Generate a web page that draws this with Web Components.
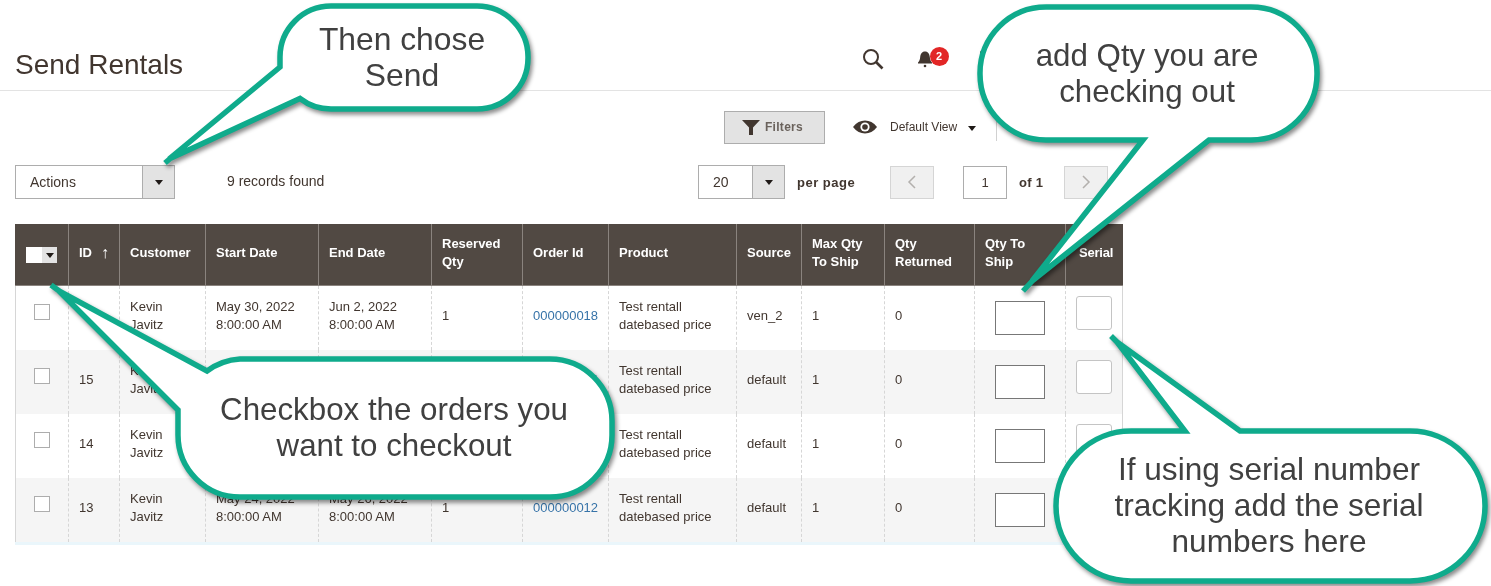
<!DOCTYPE html>
<html>
<head>
<meta charset="utf-8">
<title>Send Rentals</title>
<style>
    html, body { margin: 0; padding: 0; background: #fff; overflow: hidden; }
    body { width: 1491px; height: 586px; position: relative; font-family: "Liberation Sans", Arial, sans-serif; color: #41362f; }
</style>
</head>
<body>
<rental-header title="Send Rentals"></rental-header>
<grid-tools></grid-tools>
<rental-grid></rental-grid>

<speech-bubble cx="402" cy="57" width="220" size="31.8"
    path="M169 159 L280 67 V57 A51 51 0 0 1 331 6 H477 A51 51 0 0 1 528 57 V58 A51 51 0 0 1 477 109 H331 A51 51 0 0 1 300 98.5 Z M172 157 L165 163">Then chose Send</speech-bubble>
<speech-bubble cx="1147" cy="74" width="260" size="31.3"
    path="M1032 281 L1143 140 H1046 A66 66 0 0 1 980 74 V73 A66 66 0 0 1 1046 7 H1251 A66 66 0 0 1 1317 73 V74 A66 66 0 0 1 1251 140 H1209 Z M1036 277 L1023 291">add Qty you are checking out</speech-bubble>
<speech-bubble cx="394" cy="428" width="380" size="31.3"
    path="M59 291 L207 371 A62 62 0 0 1 240 359 H550 A62 62 0 0 1 612 421 V435 A62 62 0 0 1 550 497 H240 A62 62 0 0 1 178 435 V410 Z M62 293 L51 285">Checkbox the orders you want to checkout</speech-bubble>
<speech-bubble cx="1269" cy="505" width="330" size="31.6"
    path="M1117 342 L1240 431 H1410 A75 75 0 0 1 1485 506 A75 75 0 0 1 1410 581 H1131 A75 75 0 0 1 1056 506 A75 75 0 0 1 1131 431 H1185 Z M1120 345 L1111 336">If using serial number tracking add the serial numbers here</speech-bubble>

<script>
class RentalHeader extends HTMLElement {
    constructor() {
        super();
        this.attachShadow({ mode: 'open' });
        this.shadowRoot.innerHTML = `
            <style>
                :host {
                    display: flex;
                    align-items: flex-end;
                    justify-content: space-between;
                    height: 91px;
                    box-sizing: border-box;
                    padding: 0 0 10px 15px;
                    border-bottom: 1px solid #e3e3e3;
                    will-change: transform;
                }
                h1 {
                    margin: 0;
                    font: 400 28px/30px "Liberation Sans", Arial, sans-serif;
                    color: #41362f;
                }
                .actions {
                    display: flex;
                    align-items: center;
                    gap: 32px;
                    margin: 0 499px 10px 0;
                }
                .bell {
                    position: relative;
                    width: 22px;
                    height: 22px;
                }
                .badge {
                    position: absolute;
                    left: 13.5px;
                    top: -1.5px;
                    width: 19px;
                    height: 19px;
                    border-radius: 50%;
                    background: #e22626;
                    color: #fff;
                    font: 700 11px/19px "Liberation Sans", Arial, sans-serif;
                    text-align: center;
                }
                .user { margin-left: 6px; }
                svg { display: block; }
            </style>
            <h1></h1>
            <div class="actions">
                <svg width="22" height="22" viewBox="0 0 22 22" fill="none" stroke="#41362f">
                    <circle cx="9" cy="9" r="7" stroke-width="2"/>
                    <path d="M14 14l6.500 6.500" stroke-width="2.600"/>
                </svg>
                <div class="bell">
                    <svg width="22" height="22" viewBox="0 0 22 22" fill="#41362f">
                        <path d="M9 3.500c3.200 0 4.500 2.600 4.800 5.500.2 2.500.9 4.200 2.200 5.500v1H2v-1c1.300-1.300 2-3 2.200-5.500C4.500 6.100 5.800 3.500 9 3.500z"/>
                        <circle cx="9" cy="18" r="1.300"/>
                    </svg>
                    <span class="badge">2</span>
                </div>
                <svg class="user" width="16" height="22" viewBox="0 0 16 22" fill="#41362f">
                    <circle cx="8" cy="5.500" r="4"/>
                    <path d="M4 21c0-5 1-7 6-7s6 2 6 7z"/>
                </svg>
            </div>
        `;
        this.shadowRoot.querySelector('h1').textContent = this.getAttribute('title');
    }
}
customElements.define('rental-header', RentalHeader);

class GridSelect extends HTMLElement {
    constructor() {
        super();
        this.attachShadow({ mode: 'open' });
        this.shadowRoot.innerHTML = `
            <style>
                :host {
                    display: inline-flex;
                    height: 34px;
                    box-sizing: border-box;
                    border: 1px solid #adadad;
                    background: #fff;
                    font-size: 14px;
                    color: #41362f;
                }
                .value {
                    flex: 1;
                    line-height: 32px;
                    padding: 0 14px;
                }
                .arrow {
                    width: 31px;
                    border-left: 1px solid #adadad;
                    background: #e3e3e3;
                    display: flex;
                    align-items: center;
                    justify-content: center;
                }
                .arrow::after {
                    content: "";
                    border: 4px solid transparent;
                    border-top: 5px solid #1f1a17;
                    border-bottom: 0;
                }
            </style>
            <div class="value"><slot></slot></div>
            <div class="arrow"></div>
        `;
    }
}
customElements.define('grid-select', GridSelect);

class GridTools extends HTMLElement {
    constructor() {
        super();
        this.attachShadow({ mode: 'open' });
        this.shadowRoot.innerHTML = `
            <style>
                :host {
                    display: block;
                    padding: 19px 0 0 15px;
                    width: 1108px;
                    font-size: 13px;
                    color: #41362f;
                    will-change: transform;
                }
                .top {
                    display: flex;
                    align-items: center;
                    height: 34px;
                    padding-left: 709px;
                }
                .filters {
                    display: flex;
                    align-items: center;
                    justify-content: center;
                    gap: 5px;
                    width: 101px;
                    height: 33px;
                    box-sizing: border-box;
                    border: 1px solid #adadad;
                    background: #e3e3e3;
                    padding-right: 4px;
                    font-size: 12px;
                    font-weight: 700;
                    color: #6a625c;
                    letter-spacing: .3px;
                }
                .view {
                    display: flex;
                    align-items: center;
                    margin-left: 28px;
                    font-size: 12px;
                    color: #41362f;
                }
                .view svg { margin-right: 13px; }
                .view .caret {
                    margin-left: 11px;
                    border: 4px solid transparent;
                    border-top: 5px solid #1f1a17;
                    border-bottom: 0;
                    margin-top: 3px;
                }
                .rule {
                    width: 1px;
                    height: 28px;
                    background: #d1d1d1;
                    margin-left: 20px;
                }
                .bottom {
                    display: flex;
                    align-items: center;
                    height: 34px;
                    margin-top: 21px;
                }
                .count { margin-left: 52px; position: relative; top: -1px; font-size: 14px; }
                .actions { width: 160px; }
                .size { width: 87px; margin-left: auto; }
                .per {
                    margin-left: 12px;
                    font-weight: 700;
                    letter-spacing: .5px;
                    width: 93px;
                }
                .pager {
                    width: 44px;
                    height: 33px;
                    box-sizing: border-box;
                    border: 1px solid #d5d5d5;
                    background: #f0f0f0;
                    display: flex;
                    align-items: center;
                    justify-content: center;
                }
                .num {
                    width: 44px;
                    height: 33px;
                    box-sizing: border-box;
                    border: 1px solid #adadad;
                    margin-left: 29px;
                    text-align: center;
                    line-height: 31px;
                    font-size: 13px;
                }
                .of {
                    margin-left: 12px;
                    width: 45px;
                    font-weight: 700;
                    letter-spacing: .3px;
                }
            </style>
            <div class="top">
                <div class="filters">
                    <svg width="18" height="15" viewBox="0 0 18 15" fill="#41362f"><path d="M0 0h18l-7 7.500V15H7V7.500z"/></svg>
                    Filters
                </div>
                <div class="view">
                    <svg width="24" height="14" viewBox="0 0 24 14">
                        <path d="M0 7C3.500 2.500 7.500 .5 12 .5S20.500 2.500 24 7c-3.500 4.500-7.500 6.500-12 6.500S3.500 11.500 0 7z" fill="#41362f"/>
                        <circle cx="12" cy="7" r="4.600" fill="#fff"/>
                        <circle cx="12" cy="7" r="2.800" fill="#41362f"/>
                    </svg>
                    Default View
                    <span class="caret"></span>
                </div>
                <div class="rule"></div>
            </div>
            <div class="bottom">
                <grid-select class="actions">Actions</grid-select>
                <span class="count">9 records found</span>
                <grid-select class="size">20</grid-select>
                <span class="per">per page</span>
                <div class="pager">
                    <svg width="10" height="14" viewBox="0 0 10 14" fill="none" stroke="#b3b0ad" stroke-width="1.500"><path d="M8 1L2 7l6 6"/></svg>
                </div>
                <div class="num">1</div>
                <span class="of">of 1</span>
                <div class="pager" style="margin-right:15px">
                    <svg width="10" height="14" viewBox="0 0 10 14" fill="none" stroke="#b3b0ad" stroke-width="1.500"><path d="M2 1l6 6-6 6"/></svg>
                </div>
            </div>
        `;
    }
}
customElements.define('grid-tools', GridTools);

const COLUMNS = '54px 51px 86px 113px 113px 91px 86px 128px 65px 83px 90px 91px 57px';

const HEADINGS = ['', 'ID', 'Customer', 'Start Date', 'End Date', 'Reserved Qty', 'Order Id', 'Product', 'Source', 'Max Qty To Ship', 'Qty Returned', 'Qty To Ship', 'Serial'];

const ROWS = [
    { id: '', start: 'May 30, 2022', end: 'Jun 2, 2022', order: '000000018', source: 'ven_2' },
    { id: '15', start: 'May 24, 2022', end: 'May 26, 2022', order: '000000014', source: 'default' },
    { id: '14', start: 'May 24, 2022', end: 'May 26, 2022', order: '000000013', source: 'default' },
    { id: '13', start: 'May 24, 2022', end: 'May 26, 2022', order: '000000012', source: 'default' }
];

class RentalGrid extends HTMLElement {
    constructor() {
        super();
        this.attachShadow({ mode: 'open' });
        const head = HEADINGS.map((text, i) => {
            if (i === 0) return `<div class="th"><span class="picker"><i></i><b></b></span></div>`;
            if (i === 1) return `<div class="th">ID <span class="sort">↑</span></div>`;
            return `<div class="th">${text}</div>`;
        }).join('');
        const rows = ROWS.map(r => `
            <div class="row">
                <div class="td box"><span class="check"></span></div>
                <div class="td">${r.id}</div>
                <div class="td up">Kevin<br>Javitz</div>
                <div class="td up">${r.start}<br>8:00:00 AM</div>
                <div class="td up">${r.end}<br>8:00:00 AM</div>
                <div class="td">1</div>
                <div class="td link">${r.order}</div>
                <div class="td up">Test rentall<br>datebased price</div>
                <div class="td">${r.source}</div>
                <div class="td">1</div>
                <div class="td">0</div>
                <div class="td qty"><span class="field"></span></div>
                <div class="td serial"><span class="field small"></span></div>
            </div>`).join('');
        this.shadowRoot.innerHTML = `
            <style>
                :host {
                    display: block;
                    width: 1108px;
                    margin: 25px 0 0 15px;
                    font-size: 13px;
                    line-height: 18px;
                    color: #41362f;
                    will-change: transform;
                }
                .row, .head {
                    display: grid;
                    grid-template-columns: ${COLUMNS};
                }
                .head {
                    height: 62px;
                    background: #514943;
                    color: #fff;
                    font-weight: 700;
                    border-bottom: 1px solid #8a837e;
                    box-sizing: border-box;
                }
                .th {
                    display: flex;
                    align-items: center;
                    padding: 0 10px 4px;
                    border-right: 1px solid #8a837e;
                    box-sizing: border-box;
                }
                .th:first-child { padding: 0 0 22px 11px; align-items: flex-end; }
                .th:last-child { border-right: 0; padding-left: 13px; padding-right: 0; letter-spacing: -.2px; }
                .sort { margin-left: 9px; font-weight: 400; font-size: 16px; }
                .picker { display: flex; width: 31px; height: 16px; }
                .picker i { width: 16px; background: #fff; }
                .picker b {
                    flex: 1;
                    background: #e3e3e3;
                    display: flex;
                    align-items: center;
                    justify-content: center;
                }
                .picker b::after {
                    content: "";
                    border: 4px solid transparent;
                    border-top: 5px solid #1f1a17;
                    border-bottom: 0;
                }
                .rows { border-bottom: 3px solid #eaf6fb; }
                .row { height: 64px; }
                .row:nth-child(even) { background: #f5f5f5; }
                .td {
                    display: block;
                    padding: 21px 0 0 10px;
                    border-right: 1px dashed #d6d6d6;
                    box-sizing: border-box;
                    white-space: nowrap;
                }
                .td:first-child { border-left: 1px solid #d6d6d6; }
                .td:last-child { border-right: 1px solid #d6d6d6; }
                .td.up { padding-top: 12px; }
                .td.link { color: #3673a8; padding-left: 10px; }
                .td.box { padding: 18px 0 0 18px; }
                .check {
                    display: block;
                    width: 14px;
                    height: 14px;
                    border: 1px solid #adadad;
                    background: #fff;
                }
                .td.qty { padding: 15px 0 0 20px; }
                .td.serial { padding: 10px 0 0 10px; }
                .field {
                    display: block;
                    width: 50px;
                    height: 34px;
                    box-sizing: border-box;
                    border: 1px solid #777;
                    background: #fff;
                }
                .field.small {
                    width: 36px;
                    border-color: #c4c4c4;
                    border-radius: 3px;
                }
            </style>
            <div class="head">${head}</div>
            <div class="rows">${rows}</div>
        `;
    }
}
customElements.define('rental-grid', RentalGrid);

class SpeechBubble extends HTMLElement {
    constructor() {
        super();
        this.attachShadow({ mode: 'open' });
        this.shadowRoot.innerHTML = `
            <style>
                :host {
                    position: absolute;
                    left: 0;
                    top: 0;
                    width: 1491px;
                    height: 586px;
                    pointer-events: none;
                    will-change: transform;
                }
                svg {
                    position: absolute;
                    left: 0;
                    top: 0;
                    filter: drop-shadow(2px 3px 2px rgba(0, 0, 0, .45));
                }
                path {
                    fill: #fff;
                    stroke: #0fab8c;
                    stroke-width: 5.5;
                    stroke-linejoin: miter;
                    stroke-miterlimit: 5;
                }
                .text {
                    position: absolute;
                    left: ${this.getAttribute('cx')}px;
                    top: ${this.getAttribute('cy')}px;
                    width: ${this.getAttribute('width')}px;
                    transform: translate(-50%, -50%);
                    text-align: center;
                    font: 400 ${this.getAttribute('size')}px/36px "Liberation Sans", Arial, sans-serif;
                    color: #404040;
                }
            </style>
            <svg width="1491" height="586" viewBox="0 0 1491 586"><path d="${this.getAttribute('path')}"/></svg>
            <div class="text"><slot></slot></div>
        `;
    }
}
customElements.define('speech-bubble', SpeechBubble);
</script>
</body>
</html>
